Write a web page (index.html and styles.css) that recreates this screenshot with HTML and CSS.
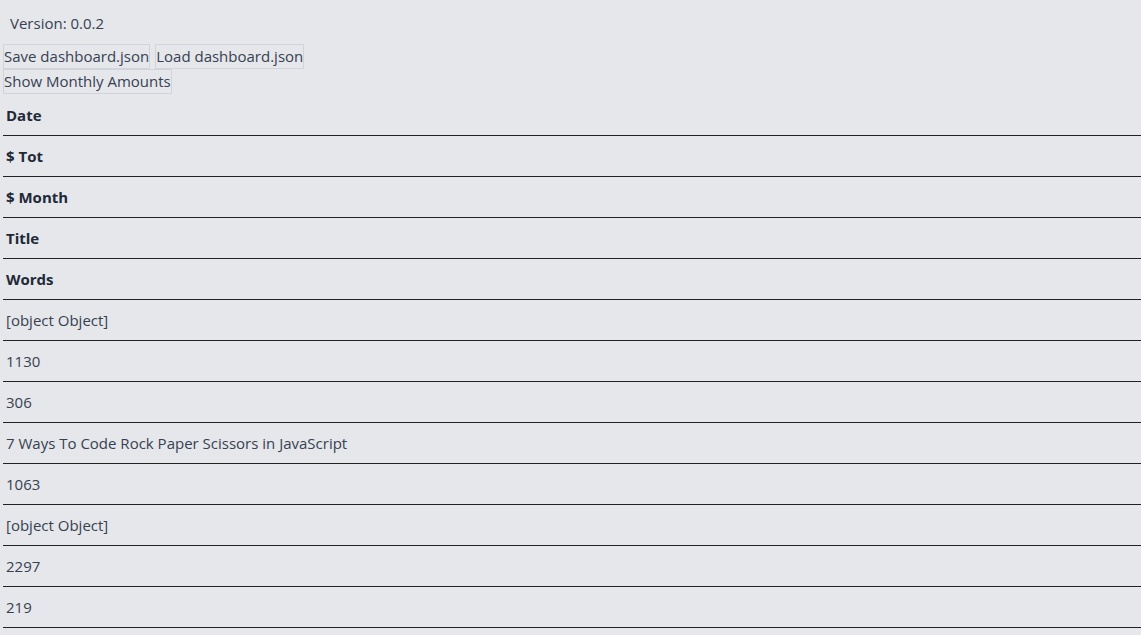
FILE: index.html
```html
<!DOCTYPE html>
<html>
<head>
<meta charset="utf-8">
<link rel="stylesheet" href="styles.css">
</head>
<body>
<div class="app">
  <div class="version">Version: 0.0.2</div>
  <div class="actions">
    <button class="btn">Save dashboard.json</button>
    <button class="btn">Load dashboard.json</button>
  </div>
  <div class="actions">
    <button class="btn">Show Monthly Amounts</button>
  </div>
  <div class="table">
    <div class="cell head">Date</div>
    <div class="cell head">$ Tot</div>
    <div class="cell head">$ Month</div>
    <div class="cell head">Title</div>
    <div class="cell head">Words</div>
    <div class="cell">[object Object]</div>
    <div class="cell">1130</div>
    <div class="cell">306</div>
    <div class="cell">7 Ways To Code Rock Paper Scissors in JavaScript</div>
    <div class="cell">1063</div>
    <div class="cell">[object Object]</div>
    <div class="cell">2297</div>
    <div class="cell">219</div>
  </div>
</div>
</body>
</html>
```
FILE: styles.css
```css
html, body {
  margin: 0;
  padding: 0;
  background: #e5e7eb;
}
body {
  font-family: "Open Sans", "Noto Sans", sans-serif;
  font-size: 15px;
  color: #1f2937;
}
.app {
  padding: 0 0 0 3px;
}
.version {
  padding: 13px 0 0 7px;
  height: 31px;
  line-height: 20px;
  color: #374151;
}
.actions {
  display: flex;
  gap: 5px;
}
.btn {
  font: inherit;
  color: #374151;
  background: #e5e7eb;
  border: 1px solid #d1d5db;
  padding: 0;
  height: 25px;
  line-height: 23px;
}
.table {
  display: flex;
  flex-direction: column;
  padding-top: 1px;
}
.cell {
  height: 40px;
  line-height: 40px;
  padding-left: 3px;
  border-bottom: 1px solid #222;
  color: #374151;
  white-space: nowrap;
}
.cell.head {
  font-weight: 700;
  color: #1f2937;
}
```
